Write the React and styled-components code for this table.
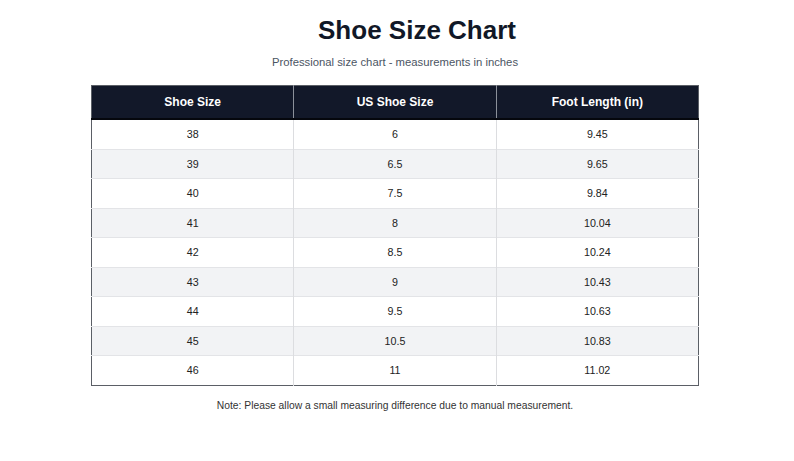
import React from "react";
import styled, { createGlobalStyle } from "styled-components";

const Global = createGlobalStyle`
  html, body { margin: 0; padding: 0; background: #ffffff; }
  body { font-family: "Liberation Sans", Arial, Helvetica, sans-serif; }
`;

const Page = styled.div`
  display: flex;
  flex-direction: column;
  align-items: stretch;
  padding: 15px 95px 0 91px;
`;

const Title = styled.h1`
  margin: 0;
  padding-left: 44px;
  font-size: 26px;
  line-height: 31px;
  font-weight: 700;
  color: #111827;
  text-align: center;
`;

const Subtitle = styled.p`
  margin: 9px 0 0;
  font-size: 11.3px;
  line-height: 14px;
  color: #4b5563;
  text-align: center;
`;

const Table = styled.table`
  margin-top: 16px;
  width: 100%;
  border-collapse: collapse;
  table-layout: fixed;
  border: 1px solid #5b5f66;
`;

const HeadCell = styled.th`
  background: #121829;
  color: #ffffff;
  font-size: 12px;
  font-weight: 700;
  line-height: 14px;
  padding: 9px 8px;
  text-align: center;
  border-bottom: 2px solid #05070d;
  border-left: 1px solid #8b909a;
  &:first-child { border-left: none; }
`;

const Row = styled.tr`
  background: ${(p) => (p.$alt ? "#f2f3f5" : "#ffffff")};
`;

const Cell = styled.td`
  font-size: 10.7px;
  line-height: 14.5px;
  padding: 7px 8px;
  color: #222222;
  text-align: center;
  border-top: 1px solid #e3e4e7;
  border-left: 1px solid #dcdde0;
  &:first-child { border-left: none; }
`;

const Note = styled.p`
  margin: 14px 0 0;
  font-size: 10.3px;
  line-height: 12.4px;
  color: #333333;
  text-align: center;
`;

const rows = [
  ["38", "6", "9.45"],
  ["39", "6.5", "9.65"],
  ["40", "7.5", "9.84"],
  ["41", "8", "10.04"],
  ["42", "8.5", "10.24"],
  ["43", "9", "10.43"],
  ["44", "9.5", "10.63"],
  ["45", "10.5", "10.83"],
  ["46", "11", "11.02"],
];

export default function App() {
  return (
    <>
      <Global />
      <Page>
        <Title>Shoe Size Chart</Title>
        <Subtitle>Professional size chart - measurements in inches</Subtitle>
        <Table>
          <thead>
            <tr>
              <HeadCell>Shoe Size</HeadCell>
              <HeadCell>US Shoe Size</HeadCell>
              <HeadCell>Foot Length (in)</HeadCell>
            </tr>
          </thead>
          <tbody>
            {rows.map((r, i) => (
              <Row key={r[0]} $alt={i % 2 === 1}>
                {r.map((c, j) => (
                  <Cell key={j}>{c}</Cell>
                ))}
              </Row>
            ))}
          </tbody>
        </Table>
        <Note>Note: Please allow a small measuring difference due to manual measurement.</Note>
      </Page>
    </>
  );
}
